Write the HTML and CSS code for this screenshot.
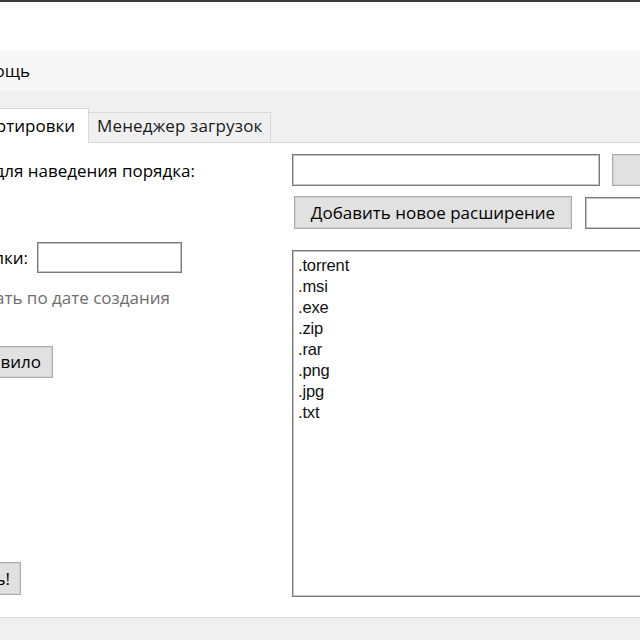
FILE: index.html
```html
<!DOCTYPE html>
<html lang="ru">
<head>
<meta charset="utf-8">
<title>Сортировщик</title>
<link rel="stylesheet" href="styles.css">
</head>
<body>
<div class="window">
  <div class="topline"></div>
  <div class="titlearea"></div>
  <div class="menubar">
    <div class="clip menu-clip"><span class="menu-item">Помощь</span></div>
  </div>
  <div class="tabstrip">
    <div class="clip tab-clip"><div class="tab tab-active">Правила сортировки</div></div>
    <div class="tab tab-inactive">Менеджер загрузок</div>
    <div class="tab-filler"></div>
  </div>
  <div class="panel">
    <div class="col-left">
      <div class="row row-label1">
        <div class="clip label1-clip"><span>Папка для наведения порядка:</span></div>
      </div>
      <div class="row row-name">
        <div class="clip name-clip"><span>Название папки:</span></div>
        <div class="input name-input"></div>
      </div>
      <div class="row row-check">
        <div class="clip check-clip"><span class="check-box"></span><span>Сортировать по дате создания</span></div>
      </div>
      <div class="row row-btn1">
        <div class="clip btn1-clip"><div class="btn btn-rule">Добавить правило</div></div>
      </div>
      <div class="row row-btn2">
        <div class="clip btn2-clip"><div class="btn btn-go">Сортировать!</div></div>
      </div>
    </div>
    <div class="col-right">
      <div class="row row-path">
        <div class="input path-input"></div>
        <div class="btn btn-browse">Обзор...</div>
      </div>
      <div class="row row-ext">
        <div class="btn btn-add">Добавить новое расширение</div>
        <div class="input ext-input"></div>
      </div>
      <div class="listbox">
        <div class="item">.torrent</div>
        <div class="item">.msi</div>
        <div class="item">.exe</div>
        <div class="item">.zip</div>
        <div class="item">.rar</div>
        <div class="item">.png</div>
        <div class="item">.jpg</div>
        <div class="item">.txt</div>
      </div>
    </div>
  </div>
  <div class="statusbar"></div>
</div>
</body>
</html>
```

FILE: styles.css
```css
* { box-sizing: border-box; }
html, body { margin: 0; padding: 0; }
body {
  width: 640px;
  height: 640px;
  overflow: hidden;
  background: #fff;
  font-family: "Open Sans", "Liberation Sans", sans-serif;
  font-size: 17px;
  color: #000;
}
.window { display: flex; flex-direction: column; height: 640px; }
.topline { height: 2px; background: #3c3c3c; flex: none; }
.titlearea { height: 49px; background: #fff; flex: none; }
.menubar {
  height: 39px; flex: none;
  background: #f7f7f7;
  display: flex; align-items: center;
}
.clip {
  display: flex; justify-content: flex-end; align-items: center;
  white-space: nowrap; flex: none;
}
.menu-clip { width: 30px; }
.menu-item { line-height: 22px; }

.tabstrip {
  height: 53px; flex: none;
  background: #f0f0f0;
  display: flex; align-items: flex-end;
}
.tab { white-space: nowrap; line-height: 22px; flex: none; }
.tab-clip { width: 89px; align-items: flex-end; }
.tab-active {
  height: 35px;
  background: #fff;
  border-top: 1px solid #d9d9d9;
  border-right: 1px solid #d9d9d9;
  padding: 6px 13px 0 8px;
}
.tab-inactive {
  height: 31px;
  background: #f0f0f0;
  border-top: 1px solid #d9d9d9;
  border-right: 1px solid #d9d9d9;
  border-bottom: 1px solid #d9d9d9;
  padding: 2px 8px 0 8px;
  color: #1a1a1a;
  letter-spacing: 0.15px;
}
.tab-filler { flex: 1; height: 1px; background: #d9d9d9; }

.panel { flex: 1; display: flex; background: #fff; }
.statusbar { height: 23px; flex: none; background: #f0f0f0; border-top: 1px solid #dadada; }

.row { display: flex; align-items: center; }
.col-left { width: 292px; flex: none; display: flex; flex-direction: column; }
.col-right { flex: none; width: 420px; display: flex; flex-direction: column; }

.input {
  background: #fff;
  border: 1px solid #7a7a7a;
  box-shadow: inset 0 0 0 1px #c4c4c4;
  flex: none;
}
.btn {
  background: #e1e1e1;
  border: 1px solid #adadad;
  box-shadow: inset 0 0 0 1px #d2d2d2;
  display: flex; align-items: center; justify-content: center;
  white-space: nowrap; flex: none;
  line-height: 22px;
}

.row-label1 { margin-top: 11px; height: 32px; }
.label1-clip { width: 195px; }

.row-name { margin-top: 56px; height: 31px; gap: 9px; }
.name-clip { width: 28px; }
.name-input { width: 145px; height: 31px; }

.row-check { margin-top: 10px; height: 28px; }
.check-clip { width: 170px; color: #6d6d6d; gap: 6px; }
.check-box { width: 16px; height: 16px; border: 1px solid #bcbcbc; background: #fff; flex: none; }

.row-btn1 { margin-top: 35px; height: 32px; }
.btn1-clip { width: 53px; }
.btn-rule { height: 32px; padding: 0 11px 0 12px; }

.row-btn2 { margin-top: 184px; height: 33px; }
.btn2-clip { width: 21px; }
.btn-go { height: 33px; padding: 0 10px 0 12px; }

.row-path { margin-top: 11px; gap: 12px; }
.path-input { width: 308px; height: 32px; }
.btn-browse { width: 130px; height: 32px; }

.row-ext { margin-top: 10px; align-items: flex-start; }
.btn-add { margin-left: 2px; width: 278px; height: 33px; }
.ext-input { margin-left: 13px; margin-top: 1px; width: 150px; height: 32px; }

.listbox {
  margin-top: 21px;
  height: 347px;
  width: 400px;
  background: #fff;
  border: 1px solid #7a7a7a;
  box-shadow: inset 0 0 0 1px #c4c4c4;
  padding: 4px 0 0 5px;
  font-family: "Liberation Sans", Arial, sans-serif;
  font-size: 16.5px;
  letter-spacing: -0.15px;
}
.item { line-height: 21px; height: 21px; color: #111; }
```
